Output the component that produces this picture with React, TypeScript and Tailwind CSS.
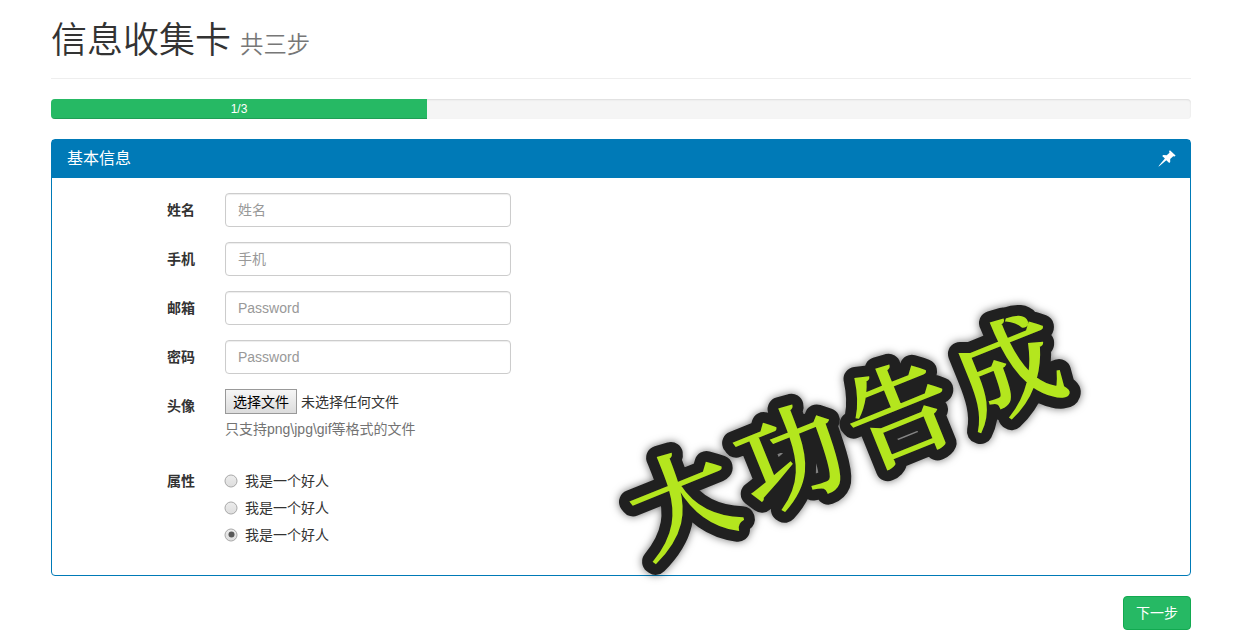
import type { ReactNode } from 'react';

const fields = [
  { label: '姓名', placeholder: '姓名', type: 'text' },
  { label: '手机', placeholder: '手机', type: 'text' },
  { label: '邮箱', placeholder: 'Password', type: 'text' },
  { label: '密码', placeholder: 'Password', type: 'password' },
];

const options = [
  { label: '我是一个好人', selected: false },
  { label: '我是一个好人', selected: false },
  { label: '我是一个好人', selected: true },
];

function Label({ children }: { children: ReactNode }) {
  return <div className="w-[143px] shrink-0 text-right font-bold leading-5">{children}</div>;
}

function PinIcon() {
  return (
    <svg width="18" height="18" viewBox="0 0 18 18" fill="#fff" aria-hidden="true">
      <path d="M11.9.2 17.6 5.4 16.6 6.4 15.2 6.2 12.2 9.1 12.2 12 11.2 13 8.3 10.2 2.1 15.6.4 16.7 1.2 15.2 6.9 8.5 4.2 5.9 5.3 4.9 8.7 5.2 11.5 2.7 11.1 1.2Z" />
    </svg>
  );
}

function Radio({ label, selected }: { label: string; selected: boolean }) {
  return (
    <label className="flex h-5 items-center">
      <span className="mr-[7px] flex size-[13px] -translate-x-[0.5px] -translate-y-[0.5px] items-center justify-center rounded-full border border-[#a6a6a6] bg-linear-to-b from-[#ececec] to-[#dedede]">
        {selected && <span className="size-[6px] rounded-full bg-[#595959]" />}
      </span>
      {label}
    </label>
  );
}

function Banner() {
  return (
    <svg
      className="pointer-events-none absolute left-[548px] top-[140px] overflow-visible drop-shadow-[0_0_4px_rgba(0,0,0,0.55)]"
      width="500"
      height="310"
      viewBox="600 280 500 310"
      strokeLinejoin="round"
    >
      <defs>
        <text
          id="banner-text"
          transform="translate(682 501) rotate(-22)"
          x="0 117 234 351"
          y="39"
          textAnchor="middle"
          className="font-['Noto_Serif_CJK_SC','Noto_Sans_CJK_SC',serif] text-[105px] font-medium"
        >
          大功告成
        </text>
      </defs>
      <use href="#banner-text" className="fill-[#202020] stroke-[#202020]" strokeWidth="24" />
      <use href="#banner-text" className="fill-[#b4e61e] stroke-[#b4e61e]" strokeWidth="2" strokeLinejoin="miter" />
    </svg>
  );
}

export default function App() {
  return (
    <div className="h-[632px] w-full overflow-hidden bg-white pl-[51px] font-['Liberation_Sans','Noto_Sans_CJK_SC',sans-serif] text-sm text-[#333]">
      <main className="w-[1140px]">
        <header className="flex h-[79px] items-baseline gap-[10px] border-b border-[#eee] pt-[18px] font-['Noto_Sans_CJK_SC',sans-serif] font-[350]">
          <h1 className="-translate-y-px text-[36px] leading-10">信息收集卡</h1>
          <small className="-translate-x-px -translate-y-px text-[23.4px] leading-6 text-[#777]">共三步</small>
        </header>

        <div className="mt-5 h-5 overflow-hidden rounded bg-[#f5f5f5] shadow-[inset_0_1px_2px_rgba(0,0,0,0.1)]">
          <div className="h-full w-[376px] bg-[#26b964] text-center text-xs leading-5 text-white shadow-[inset_0_-1px_0_rgba(0,0,0,0.15)]">
            1/3
          </div>
        </div>

        <section className="relative mt-5 h-[437px] rounded border border-[#007ab7]">
          <div className="flex h-[38px] items-center justify-between bg-[#007ab7] pl-[15px] pr-[14px] text-white">
            <h2 className="text-base leading-5">基本信息</h2>
            <PinIcon />
          </div>

          <form className="pt-[15px]">
            {fields.map((f) => (
              <div key={f.label} className="mb-[15px] flex h-[34px] items-center">
                <Label>{f.label}</Label>
                <input
                  type={f.type}
                  placeholder={f.placeholder}
                  className="ml-[30px] h-[34px] w-[286px] rounded border border-[#ccc] px-3 text-sm shadow-[inset_0_1px_1px_rgba(0,0,0,0.075)] placeholder:text-[#999]"
                />
              </div>
            ))}

            <div className="flex h-[75px]">
              <div className="pt-[7px]">
                <Label>头像</Label>
              </div>
              <div className="ml-[30px]">
                <div className="flex h-[25px] items-center">
                  <button
                    type="button"
                    className="h-[25px] w-[72px] border border-[#999] bg-linear-to-b from-[#f6f6f6] to-[#dcdcdc] leading-5 text-black"
                  >
                    选择文件
                  </button>
                  <span className="ml-1">未选择任何文件</span>
                </div>
                <p className="mt-[5px] leading-5 text-[#737373]">只支持png\jpg\gif等格式的文件</p>
              </div>
            </div>

            <div className="flex pt-[7px]">
              <Label>属性</Label>
              <div className="ml-[30px] flex flex-col gap-[7px]">
                {options.map((o, i) => (
                  <Radio key={i} {...o} />
                ))}
              </div>
            </div>
          </form>

          <Banner />
        </section>

        <div className="mt-5 flex justify-end">
          <button
            type="button"
            className="h-[34px] w-[68px] rounded border border-[#12a950] bg-[#26b964] text-sm leading-5 text-white"
          >
            下一步
          </button>
        </div>
      </main>
    </div>
  );
}
